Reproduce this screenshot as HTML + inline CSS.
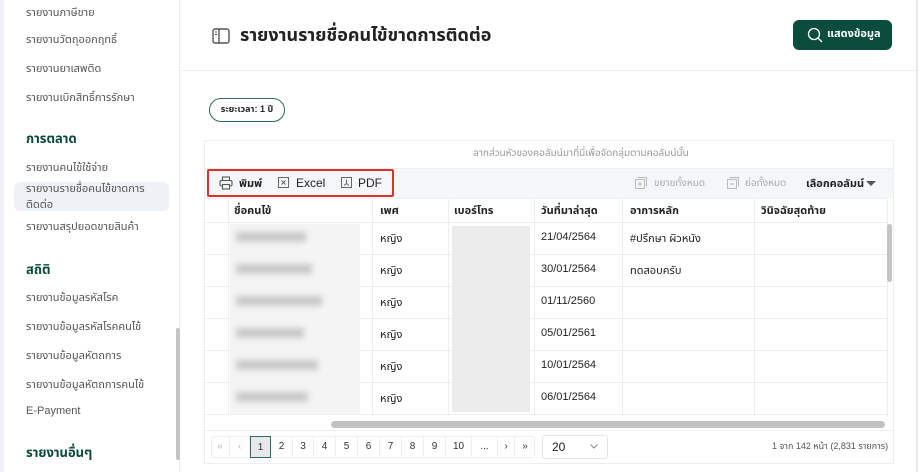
<!DOCTYPE html>
<html><head><meta charset="utf-8"><style>
*{box-sizing:border-box;margin:0;padding:0}
body{width:920px;height:472px;overflow:hidden;background:#fff;font-family:"Liberation Sans","Noto Sans Thai","Noto Sans CJK SC",sans-serif;color:#222;position:relative;font-size:12px}
.abs{position:absolute}
.side{left:0;top:0;width:180px;height:472px;border-right:1px solid #e8ebf0;border-left:4px solid #f0f2f5}
.si{position:absolute;left:22px;font-size:11px;color:#555;white-space:nowrap}
.sh{position:absolute;left:22px;font-size:13px;font-weight:bold;color:#0b4a38}
.hdr{left:181px;top:0;width:737px;height:71px;border-bottom:1px solid #eceef2}
.rb{right:2px;top:0;width:2px;height:472px;background:#e6e8ec}
.g{left:204px;top:140px;width:690px;height:324px;border:1px solid #eceef2}
.cell{position:absolute;font-size:11px;white-space:nowrap}
.vl{position:absolute;top:198px;width:1px;height:218px;background:#eceef2}
.hl{position:absolute;left:205px;width:683px;height:1px;background:#eceef2}
.blur{position:absolute;background:#c9c9c9;filter:blur(3px)}
.pb{position:absolute;top:436px;height:22px;font-size:10px;text-align:center;line-height:22px;border-right:1px solid #eceef2;color:#333}
</style></head><body>
<div class="abs side">
<div class="si" style="top:4px">รายงานภาษีขาย</div>
<div class="si" style="top:31px">รายงานวัตถุออกฤทธิ์</div>
<div class="si" style="top:60px">รายงานยาเสพติด</div>
<div class="si" style="top:89px">รายงานเบิกสิทธิ์การรักษา</div>
<div class="sh" style="top:129px">การตลาด</div>
<div class="si" style="top:159px">รายงานคนไข้ใช้จ่าย</div>
<div class="abs" style="left:10px;top:182px;width:155px;height:29px;background:#eef1f6;border-radius:6px"></div>
<div class="si" style="top:181px;line-height:16px">รายงานรายชื่อคนไข้ขาดการ<br>ติดต่อ</div>
<div class="si" style="top:218px">รายงานสรุปยอดขายสินค้า</div>
<div class="sh" style="top:260px">สถิติ</div>
<div class="si" style="top:289px">รายงานข้อมูลรหัสโรค</div>
<div class="si" style="top:318px">รายงานข้อมูลรหัสโรคคนไข้</div>
<div class="si" style="top:347px">รายงานข้อมูลหัตถการ</div>
<div class="si" style="top:376px">รายงานข้อมูลหัตถการคนไข้</div>
<div class="si" style="top:405px">E-Payment</div>
<div class="sh" style="top:443px">รายงานอื่นๆ</div>
<div class="abs" style="left:172px;top:328px;width:4px;height:132px;background:#c4c4c4;border-radius:2px"></div>
</div>
<div class="abs hdr"></div>
<div class="abs rb"></div>
<svg class="abs" style="left:212px;top:28px" width="18" height="16" viewBox="0 0 18 16"><rect x="1" y="1" width="16" height="14" rx="2" fill="none" stroke="#555" stroke-width="1.4"/><line x1="7" y1="1" x2="7" y2="15" stroke="#555" stroke-width="1.4"/><line x1="3" y1="4" x2="5" y2="4" stroke="#555"/><line x1="3" y1="6.5" x2="5" y2="6.5" stroke="#555"/></svg>
<div class="abs" style="left:240px;top:23px;font-size:18px;font-weight:bold;color:#222">รายงานรายชื่อคนไข้ขาดการติดต่อ</div>
<div class="abs" style="left:793px;top:20px;width:99px;height:30px;background:#0b4d3c;border-radius:6px;color:#fff;font-size:11px;font-weight:bold;line-height:29px;padding-left:34px">แสดงข้อมูล</div>
<svg class="abs" style="left:807px;top:27px" width="16" height="16" viewBox="0 0 16 16"><circle cx="7" cy="7" r="5.5" fill="none" stroke="#fff" stroke-width="1.3"/><line x1="11" y1="11" x2="15" y2="15" stroke="#fff" stroke-width="1.3"/></svg>
<div class="abs" style="left:209px;top:98px;width:76px;height:24px;border:1.5px solid #2f6b57;border-radius:12px;font-size:9px;font-weight:bold;text-align:center;line-height:20px">ระยะเวลา: 1 ปี</div>
<div class="abs g"></div>
<div class="abs" style="left:205px;top:140px;width:688px;height:27px;text-align:center;line-height:27px;font-size:10px;color:#999">&nbsp;&nbsp;&nbsp;&nbsp;&nbsp;&nbsp;&nbsp;&nbsp;&nbsp;&nbsp;&nbsp;&nbsp;&nbsp;&nbsp;&nbsp;&nbsp;&nbsp;&nbsp;&nbsp;&nbsp;&nbsp;&nbsp;&nbsp;ลากส่วนหัวของคอลัมน์มาที่นี่เพื่อจัดกลุ่มตามคอลัมน์นั้น</div>
<div class="abs" style="left:205px;top:168px;width:688px;height:30px;background:#f5f6f8;border-top:1px solid #eceef2"></div>
<div class="abs" style="left:207px;top:169px;width:187px;height:28px;border:2px solid #e03131;border-radius:2px"></div>
<svg class="abs" style="left:219px;top:176px" width="14" height="14" viewBox="0 0 14 14"><rect x="3.5" y="1" width="7" height="3.5" fill="none" stroke="#555" stroke-width="1.1"/><rect x="1" y="4.5" width="12" height="5.5" rx="1.5" fill="none" stroke="#555" stroke-width="1.1"/><rect x="3.5" y="8.5" width="7" height="4.5" fill="#f5f6f8" stroke="#555" stroke-width="1.1"/></svg>
<div class="cell" style="left:239px;top:175px;font-weight:bold">พิมพ์</div>
<svg class="abs" style="left:278px;top:177px" width="11" height="11" viewBox="0 0 11 11"><rect x=".5" y=".5" width="10" height="10" fill="none" stroke="#666"/><path d="M3.5 3.5l4 4M7.5 3.5l-4 4" stroke="#666"/></svg>
<div class="cell" style="left:296px;top:176px;font-size:12px">Excel</div>
<svg class="abs" style="left:341px;top:177px" width="11" height="11" viewBox="0 0 11 11"><rect x=".5" y=".5" width="10" height="10" fill="none" stroke="#666"/><path d="M5.5 2.5v4l-2.5 2M5.5 6.5l2.5 2" stroke="#666" fill="none"/></svg>
<div class="cell" style="left:358px;top:176px;font-size:12px">PDF</div>
<svg class="abs" style="left:635px;top:177px" width="12" height="12" viewBox="0 0 12 12"><rect x=".5" y="2.5" width="9" height="9" fill="none" stroke="#bbb"/><path d="M2.5.5h9v9" fill="none" stroke="#bbb"/><path d="M5 5v4M3 7h4" stroke="#bbb"/></svg>
<div class="cell" style="left:654px;top:175px;color:#aaa;font-size:10px">ขยายทั้งหมด</div>
<svg class="abs" style="left:727px;top:177px" width="12" height="12" viewBox="0 0 12 12"><rect x=".5" y="2.5" width="9" height="9" fill="none" stroke="#bbb"/><path d="M2.5.5h9v9" fill="none" stroke="#bbb"/><path d="M3 7h4" stroke="#bbb"/></svg>
<div class="cell" style="left:745px;top:175px;color:#aaa;font-size:10px">ย่อทั้งหมด</div>
<div class="cell" style="left:806px;top:175px;font-weight:bold;font-size:11px">เลือกคอลัมน์</div>
<svg class="abs" style="left:866px;top:181px" width="10" height="6"><path d="M0 0h10L5 5z" fill="#555"/></svg>
<div class="hl" style="top:198px"></div>
<div class="hl" style="top:222px"></div>
<div class="hl" style="top:254px"></div>
<div class="hl" style="top:286px"></div>
<div class="hl" style="top:318px"></div>
<div class="hl" style="top:350px"></div>
<div class="hl" style="top:382px"></div>
<div class="hl" style="top:414px"></div>
<div class="vl" style="left:228px"></div>
<div class="vl" style="left:372px"></div>
<div class="vl" style="left:448px"></div>
<div class="vl" style="left:534px"></div>
<div class="vl" style="left:622px"></div>
<div class="vl" style="left:754px"></div>
<div class="vl" style="left:887px"></div>
<div class="cell" style="left:234px;top:202px;font-weight:bold">ชื่อคนไข้</div>
<div class="cell" style="left:380px;top:202px;font-weight:bold">เพศ</div>
<div class="cell" style="left:454px;top:202px;font-weight:bold">เบอร์โทร</div>
<div class="cell" style="left:541px;top:202px;font-weight:bold">วันที่มาล่าสุด</div>
<div class="cell" style="left:630px;top:202px;font-weight:bold">อาการหลัก</div>
<div class="cell" style="left:761px;top:202px;font-weight:bold">วินิจฉัยสุดท้าย</div>
<div class="abs" style="left:230px;top:224px;width:130px;height:190px;background:#f4f4f4"></div>
<div class="abs" style="left:452px;top:226px;width:78px;height:186px;background:#ececec"></div>
<div class="blur" style="left:236px;top:232px;width:70px;height:10px"></div>
<div class="blur" style="left:236px;top:264px;width:76px;height:10px"></div>
<div class="blur" style="left:236px;top:296px;width:86px;height:10px"></div>
<div class="blur" style="left:236px;top:328px;width:68px;height:10px"></div>
<div class="blur" style="left:236px;top:360px;width:82px;height:10px"></div>
<div class="blur" style="left:236px;top:392px;width:72px;height:10px"></div>
<div class="cell" style="left:380px;top:230px">หญิง</div>
<div class="cell" style="left:380px;top:262px">หญิง</div>
<div class="cell" style="left:380px;top:294px">หญิง</div>
<div class="cell" style="left:380px;top:326px">หญิง</div>
<div class="cell" style="left:380px;top:358px">หญิง</div>
<div class="cell" style="left:380px;top:390px">หญิง</div>
<div class="cell" style="left:541px;top:231px">21/04/2564</div>
<div class="cell" style="left:541px;top:263px">30/01/2564</div>
<div class="cell" style="left:541px;top:295px">01/11/2560</div>
<div class="cell" style="left:541px;top:327px">05/01/2561</div>
<div class="cell" style="left:541px;top:359px">10/01/2564</div>
<div class="cell" style="left:541px;top:391px">06/01/2564</div>
<div class="cell" style="left:630px;top:230px">#ปรึกษา ผิวหนัง</div>
<div class="cell" style="left:630px;top:262px">ทดสอบครับ</div>
<div class="abs" style="left:887px;top:224px;width:5px;height:58px;background:#c4c4c4;border-radius:3px"></div>
<div class="abs" style="left:331px;top:421px;width:554px;height:7px;background:#c1c1c1;border-radius:4px"></div>
<div class="abs" style="left:205px;top:430px;width:688px;height:1px;background:#eceef2"></div>
<div class="abs" style="left:211px;top:436px;width:324px;height:22px;border:1px solid #eceef2;border-radius:3px"></div>
<div class="pb" style="left:211px;width:19px;color:#bbb">«</div>
<div class="pb" style="left:230px;width:20px;color:#bbb">‹</div>
<div class="pb" style="left:250px;width:21px;background:#e6e8eb;border:1px solid #2f6b57">1</div>
<div class="pb" style="left:271px;width:22px">2</div>
<div class="pb" style="left:293px;width:21px">3</div>
<div class="pb" style="left:314px;width:22px">4</div>
<div class="pb" style="left:336px;width:22px">5</div>
<div class="pb" style="left:358px;width:22px">6</div>
<div class="pb" style="left:380px;width:22px">7</div>
<div class="pb" style="left:402px;width:22px">8</div>
<div class="pb" style="left:424px;width:22px">9</div>
<div class="pb" style="left:446px;width:26px">10</div>
<div class="pb" style="left:472px;width:26px">...</div>
<div class="pb" style="left:498px;width:17px">›</div>
<div class="pb" style="left:515px;width:20px;border-right:none">»</div>
<div class="abs" style="left:542px;top:435px;width:66px;height:24px;border:1px solid #e3e5e9;border-radius:3px;font-size:12px;line-height:22px;padding-left:9px">20</div>
<svg class="abs" style="left:590px;top:444px" width="8" height="5"><path d="M.5.5l3.5 3.5 3.5-3.5" fill="none" stroke="#888"/></svg>
<div class="cell" style="left:772px;top:440px;font-size:9px;color:#555">1 จาก 142 หน้า (2,831 รายการ)</div>
</body></html>
